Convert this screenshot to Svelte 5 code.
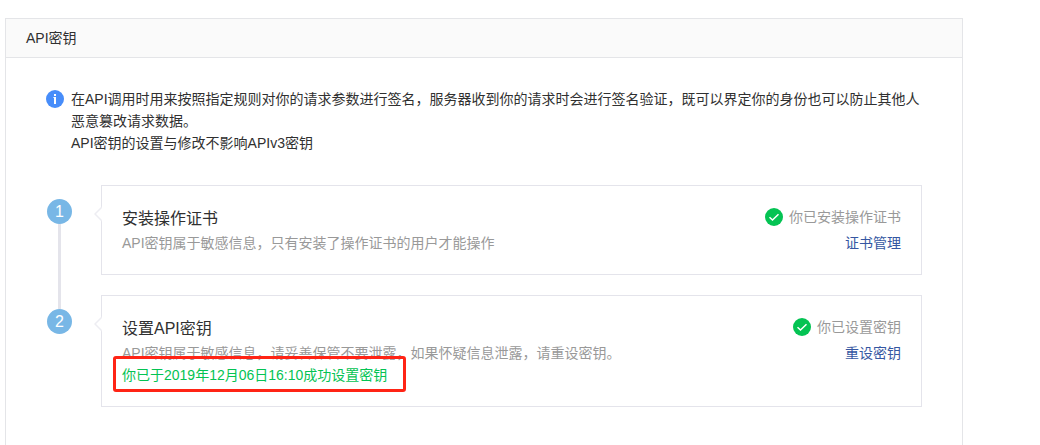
<script>
  const steps = [
    {
      title: '安装操作证书',
      description: 'API密钥属于敏感信息，只有安装了操作证书的用户才能操作',
      status: '你已安装操作证书',
      action: '证书管理'
    },
    {
      title: '设置API密钥',
      description: 'API密钥属于敏感信息，请妥善保管不要泄露，如果怀疑信息泄露，请重设密钥。',
      success: '你已于2019年12月06日16:10成功设置密钥',
      status: '你已设置密钥',
      action: '重设密钥'
    }
  ];
</script>

<main class="panel">
  <header><h1>API密钥</h1></header>
  <div class="content">
    <section class="notice">
      <svg class="info" viewBox="0 0 18 18" aria-hidden="true">
        <circle cx="9" cy="9" r="9" fill="#478dfa" />
        <path d="M8 7h2v7H8zM8 4h2v2H8z" fill="#fff" />
        <path d="M7 7h1v1H7z" fill="#fff" opacity=".6" />
      </svg>
      <div>
        <p>在API调用时用来按照指定规则对你的请求参数进行签名，服务器收到你的请求时会进行签名验证，既可以界定你的身份也可以防止其他人恶意篡改请求数据。</p>
        <p>API密钥的设置与修改不影响APIv3密钥</p>
      </div>
    </section>

    <ol>
      {#each steps as step, i}
        <li>
          <span class="number">{i + 1}</span>
          <article id="step-{i + 1}">
            <svg class="pointer" viewBox="0 0 8 16" aria-hidden="true">
              <path d="M8 1L1 8l7 7" fill="#fff" stroke="#ededf2" stroke-width="1.5" />
            </svg>
            <div class="details">
              <h2>{step.title}</h2>
              <p>{step.description}</p>
              {#if step.success}<p class="success">{step.success}</p>{/if}
            </div>
            <div class="state">
              <div class="status">
                <svg viewBox="0 0 18 18" aria-hidden="true">
                  <circle cx="9" cy="9" r="9" fill="#04c353" />
                  <path d="M4.5 9.2l3 2.8 6-5.8" fill="none" stroke="#fff" stroke-width="1.5" />
                </svg>
                <span>{step.status}</span>
              </div>
              <a href="#step-{i + 1}">{step.action}</a>
            </div>
          </article>
        </li>
      {/each}
    </ol>
  </div>
</main>

<style>
  :global(body) {
    margin: 0;
    background: #fff;
    color: #303030;
    font: 14px/22px "Liberation Sans", "Noto Sans CJK SC", sans-serif;
  }
  h1, h2, p, ol { margin: 0; padding: 0; font-weight: 400; }
  .panel {
    box-sizing: border-box;
    min-height: calc(100vh - 18px);
    margin: 18px 77px 0 5px;
    border: 1px solid #e4e5e8;
    border-bottom: 0;
  }
  header { padding: 8px 20px; background: #fafafa; border-bottom: 1px solid #e4e5e8; }
  h1 { font-size: 14px; line-height: 22px; }
  .content { padding: 30px 40px 38px; }
  .notice { display: flex; gap: 7px; }
  .info { width: 18px; height: 18px; flex: none; margin-top: 2px; }
  ol { display: grid; gap: 20px; margin-top: 31px; list-style: none; }
  li { position: relative; display: flex; gap: 29px; padding-left: 1px; }
  li:not(:last-child)::before {
    content: "";
    position: absolute;
    top: 26px;
    bottom: -34px;
    left: 12px;
    width: 3px;
    background: #e4e4eb;
  }
  .number {
    position: relative;
    width: 25px;
    height: 25px;
    flex: none;
    margin-top: 14px;
    border-radius: 50%;
    background: #78b7e6;
    color: #fff;
    font-size: 16px;
    line-height: 25px;
    text-align: center;
  }
  article {
    position: relative;
    box-sizing: border-box;
    display: flex;
    justify-content: space-between;
    flex: 1;
    padding: 20px;
    border: 1px solid #e4e4eb;
  }
  .pointer { position: absolute; left: -8px; top: 20px; width: 8px; height: 16px; }
  h2 { font-size: 16px; line-height: 26px; }
  .details p { color: #999; }
  .details .success { position: relative; color: #04c353; }
  .success::after {
    content: "";
    position: absolute;
    inset: -8px auto -6px -9px;
    width: 287px;
    border: 3px solid #ff2415;
    border-radius: 3px;
  }
  .state { text-align: right; flex: none; }
  .status { display: flex; align-items: center; justify-content: flex-end; gap: 6px; color: #999; }
  .status svg { width: 18px; height: 18px; }
  a { display: block; margin-top: 4px; color: #3557a2; text-decoration: none; }
</style>
